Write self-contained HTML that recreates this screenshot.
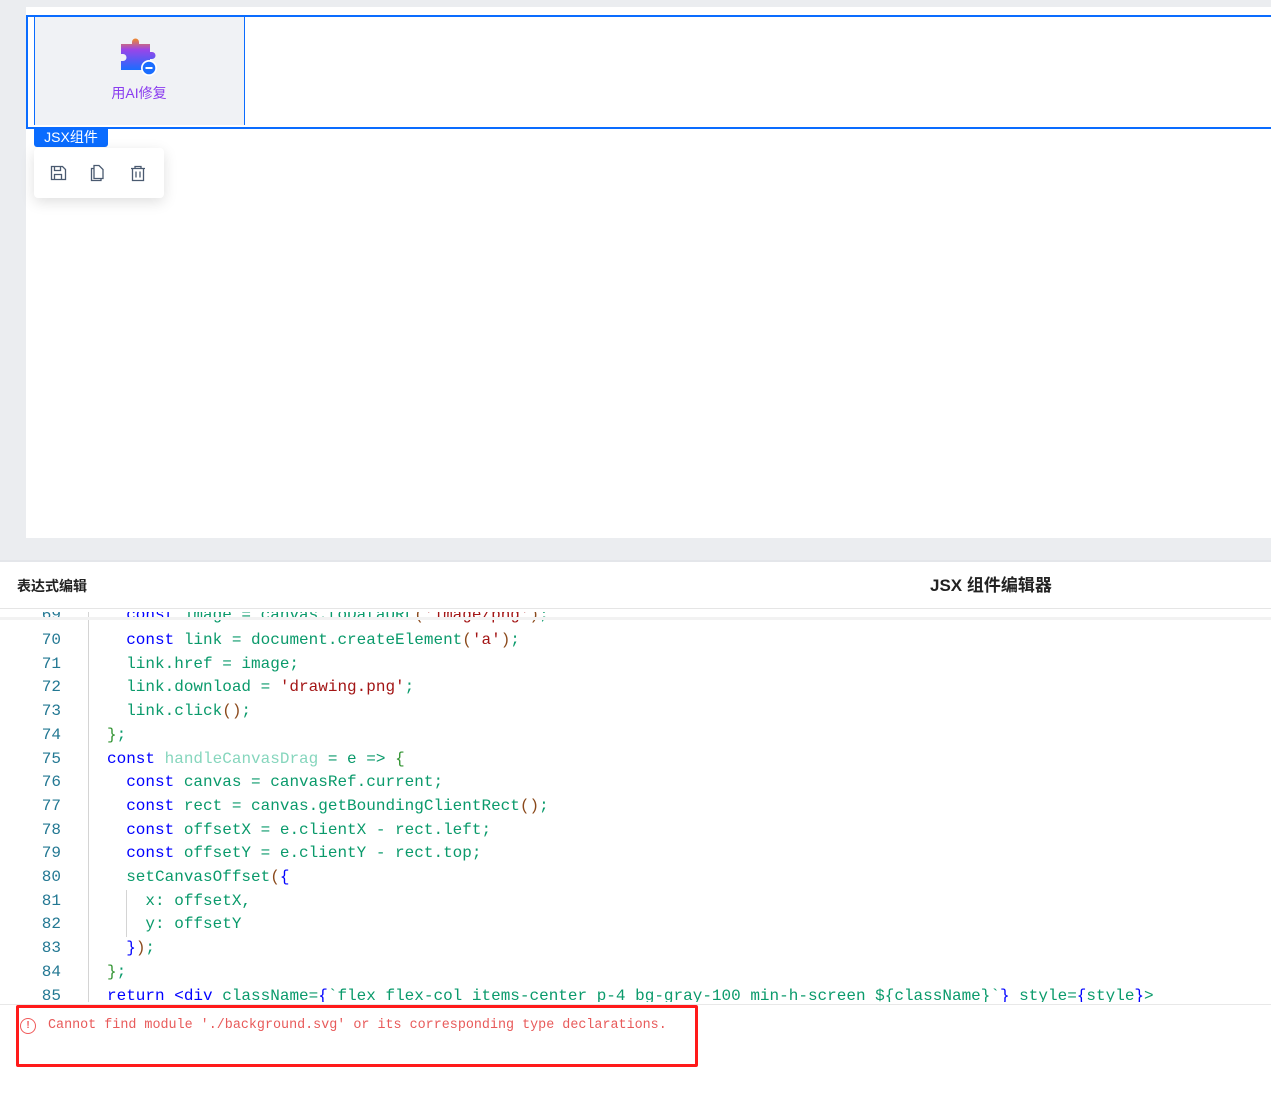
<!DOCTYPE html>
<html><head><meta charset="utf-8"><style>
body{margin:0;width:1271px;height:1100px;position:relative;background:#fff;font-family:"Liberation Sans","Noto Sans CJK SC",sans-serif;overflow:hidden}
.a{position:absolute}
.code{position:absolute;left:0;top:612px;width:1271px;height:390px;overflow:hidden}
.ln{position:absolute;left:0;width:61px;text-align:right;font:16px/23.7px "Liberation Mono",monospace;color:#237893}
.cl{position:absolute;left:107px;font:16px/23.7px "Liberation Mono",monospace;color:#0a9a6b;white-space:pre}
.k{color:#0000ff}.s{color:#a31515}.p{color:#8b4a1c}.b{color:#319331}.f{color:#86d6bd}
</style></head><body>
<div class="a" style="left:0;top:0;width:1271px;height:560px;background:#ebedf0"></div>
<div class="a" style="left:26px;top:7px;width:1245px;height:531px;background:#fff"></div>
<div class="a" style="left:26px;top:15px;width:1245px;height:110px;border:2px solid #0a6cff;border-right:none"></div>
<div class="a" style="left:34px;top:17px;width:209px;height:108px;background:#f0f2f5;border-left:1px solid #0a6cff;border-right:1px solid #0a6cff"></div>
<svg class="a" style="left:118px;top:36px" width="42" height="42" viewBox="0 0 42 42">
<defs><linearGradient id="g" x1="0" y1="0" x2="0" y2="1"><stop offset="0" stop-color="#f08a2a"/><stop offset=".35" stop-color="#9b45e8"/><stop offset="1" stop-color="#1a6dff"/></linearGradient></defs>
<path d="M3 8h11v-2a3.5 3.5 0 0 1 7 0v2h11v8h2a3.5 3.5 0 0 1 0 7h-2v11h-29v-9h2a3.5 3.5 0 0 0 0-7h-2z" fill="url(#g)"/>
<circle cx="31" cy="32" r="8" fill="#fff"/><circle cx="31" cy="32" r="6.3" fill="#1a6dff"/><rect x="27.5" y="31" width="7" height="2" fill="#fff"/></svg>
<div class="a" style="left:34px;top:83px;width:210px;text-align:center;font-size:14px;color:#8a3cf0">用AI修复</div>
<div class="a" style="left:34px;top:127px;width:74px;height:20px;background:#0a6cff;border-radius:0 0 3px 3px;color:#fff;font-size:14px;line-height:20px;text-align:center">JSX组件</div>
<div class="a" style="left:34px;top:148px;width:130px;height:50px;background:#fff;border-radius:4px;box-shadow:0 4px 14px rgba(0,0,0,.13)"></div>
<svg class="a" style="left:50px;top:164px" width="100" height="18" viewBox="0 0 100 18" fill="none" stroke="#4a5a70" stroke-width="1.3">
<path d="M1.5 2.5h11l3 3v10h-14z M4.5 2.5v4h6v-4 M4.5 15.5v-5h7v5"/>
<path d="M44 4.5h-2.5v12h9.5v-2 M44 1.5h5l4 4v9h-9z"/>
<path d="M81 4.5h14 M85 4.5v-2h6v2 M82.5 4.5v12h11v-12 M86 7.5v6 M90 7.5v6"/></svg>
<div class="a" style="left:0;top:560px;width:1271px;height:2px;background:#e4e6ea"></div>
<div class="a" style="left:17px;top:576px;font-size:14px;font-weight:bold;color:#222">表达式编辑</div>
<div class="a" style="left:930px;top:571px;font-size:17px;font-weight:bold;color:#222">JSX 组件编辑器</div>
<div class="a" style="left:0;top:608px;width:1271px;height:1px;background:#e5e5e5"></div>
<div class="code">
<div class="a" style="left:88px;top:0;width:1px;height:391px;background:#d4d4d4"></div>
<div class="a" style="left:126px;top:278px;width:1px;height:47px;background:#d4d4d4"></div>
<div class="ln" style="top:-8px">69</div><div class="cl" style="top:-8px">  <span class="k">const</span> image = canvas.toDataURL<span class="p">(</span><span class="s">'image/png'</span><span class="p">)</span>;</div>
<div class="ln" style="top:17px">70</div><div class="cl" style="top:17px">  <span class="k">const</span> link = document.createElement<span class="p">(</span><span class="s">'a'</span><span class="p">)</span>;</div>
<div class="ln" style="top:40.7px">71</div><div class="cl" style="top:40.7px">  link.href = image;</div>
<div class="ln" style="top:64.4px">72</div><div class="cl" style="top:64.4px">  link.download = <span class="s">'drawing.png'</span>;</div>
<div class="ln" style="top:88.1px">73</div><div class="cl" style="top:88.1px">  link.click<span class="p">()</span>;</div>
<div class="ln" style="top:111.8px">74</div><div class="cl" style="top:111.8px"><span class="b">}</span>;</div>
<div class="ln" style="top:135.5px">75</div><div class="cl" style="top:135.5px"><span class="k">const</span> <span class="f">handleCanvasDrag</span> = e =&gt; <span class="b">{</span></div>
<div class="ln" style="top:159.2px">76</div><div class="cl" style="top:159.2px">  <span class="k">const</span> canvas = canvasRef.current;</div>
<div class="ln" style="top:182.9px">77</div><div class="cl" style="top:182.9px">  <span class="k">const</span> rect = canvas.getBoundingClientRect<span class="p">()</span>;</div>
<div class="ln" style="top:206.6px">78</div><div class="cl" style="top:206.6px">  <span class="k">const</span> offsetX = e.clientX - rect.left;</div>
<div class="ln" style="top:230.3px">79</div><div class="cl" style="top:230.3px">  <span class="k">const</span> offsetY = e.clientY - rect.top;</div>
<div class="ln" style="top:254px">80</div><div class="cl" style="top:254px">  setCanvasOffset<span class="p">(</span><span class="k">{</span></div>
<div class="ln" style="top:277.7px">81</div><div class="cl" style="top:277.7px">    x: offsetX,</div>
<div class="ln" style="top:301.4px">82</div><div class="cl" style="top:301.4px">    y: offsetY</div>
<div class="ln" style="top:325.1px">83</div><div class="cl" style="top:325.1px">  <span class="k">}</span><span class="p">)</span>;</div>
<div class="ln" style="top:348.8px">84</div><div class="cl" style="top:348.8px"><span class="b">}</span>;</div>
<div class="ln" style="top:372.5px">85</div><div class="cl" style="top:372.5px"><span class="k">return</span> <span class="k">&lt;div</span> className=<span class="k">{</span>`flex flex-col items-center p-4 bg-gray-100 min-h-screen ${className}`<span class="k">}</span> style=<span class="k">{</span>style<span class="k">}</span>&gt;</div>
</div>
<div class="a" style="left:0;top:617px;width:1271px;height:3px;background:#f2f2f2"></div>
<div class="a" style="left:0;top:1004px;width:1271px;height:1px;background:#e8e8e8"></div>
<div class="a" style="left:16px;top:1005px;width:676px;height:56px;border:3px solid #ff1a1a;border-radius:2px"></div>
<div class="a" style="left:20px;top:1018px;width:14px;height:14px;border:1px solid #f05a5a;border-radius:50%;color:#f05a5a;font:bold 10px/14px 'Liberation Sans';text-align:center">!</div>
<div class="a" style="left:48px;top:1018px;font:13.4px/16px 'Liberation Mono',monospace;color:#e85a5a;white-space:pre">Cannot find module './background.svg' or its corresponding type declarations.</div>
</body></html>
